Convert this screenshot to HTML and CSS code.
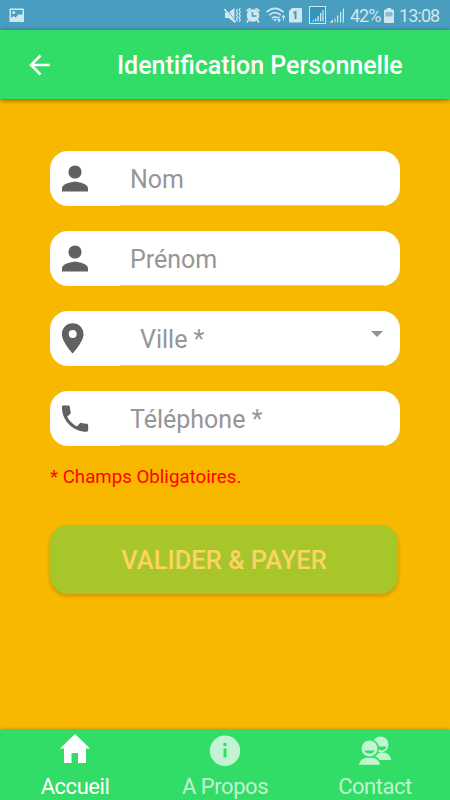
FILE: index.html
```
<!DOCTYPE html>
<html lang="fr">
<head>
  <meta charset="utf-8">
  <title>Identification Personnelle</title>
  <link rel="stylesheet" href="styles.css">
</head>
<body>
  <div class="status-bar">
    <svg class="picture" width="16" height="15" viewBox="0 0 16 15"><path fill-rule="evenodd" d="M1 .5h13.500q.5 0 .5.5v12.500q0 .5-.5.5H1q-.5 0-.5-.5V1q0-.5.5-.5zM2 2v8l2.500-2 2 1.500L10 6l1.500 1 2-1V2z"/><circle cx="4.700" cy="4.500" r="1.600"/></svg>
    <svg class="system" width="122" height="20" viewBox="223 5 122 20">
      <!-- vibrate / mute -->
      <path d="M225 12.500h3.500l6-4.500v14.500l-6-4.500H225z"/>
      <path d="M225.500 8l10.500 13.500" stroke="#499dbe" stroke-width="1"/>
      <path d="M224.300 9l11.500 13.500" stroke="#d1e7ef" stroke-width="1.800"/>
      <path d="M237.500 9l-1 2 1 2-1 2 1 2-1 2 1 2M240.300 8l-1.200 2 1.200 2-1.200 2 1.200 2-1.200 2 1.200 2-1.200 2" fill="none" stroke="#d1e7ef" stroke-width="1.200"/>
      <!-- alarm -->
      <circle cx="253" cy="15.500" r="6.300"/>
      <path d="M246.500 11l4-2.800M259.500 11l-4-2.800M248.500 20l-1.500 2.500M257.500 20l1.500 2.500" stroke="#d1e7ef" stroke-width="1.800"/>
      <path d="M252.500 12v4h4" fill="none" stroke="#499dbe" stroke-width="1.500"/>
      <!-- wifi -->
      <path d="M266.500 12.200q8.500-7.500 17 0M269.200 15.200q5.800-5 11.600 0M271.800 18.200q3.200-2.700 6.400 0" fill="none" stroke="#d1e7ef" stroke-width="1.700"/>
      <path d="M273 19h4l-2 2.500zM277 19.500h1.500v-3h1v3h1.500l-2 3zM281.500 17.500l2-3 2 3h-1.500v3h-1v-3z"/>
      <!-- sim card -->
      <path d="M292 8h9q1 0 1 1v12.500q0 1-1 1h-11q-1 0-1-1V11z"/>
      <path d="M293.500 13l2-1v7" fill="none" stroke="#499dbe" stroke-width="2"/>
      <!-- signal -->
      <rect x="309.500" y="6.500" width="16" height="17" fill="#3595b9" stroke="#d1e7ef"/>
      <path d="M312 21.500l2-2v2zM315 18.500h1.300v3H315zM317.500 16h1.300v5.500h-1.300zM320 13h1.300v8.500H320zM322.300 10h1.300v11.500h-1.300z"/>
      <path d="M329.500 22.500l3.500-3v3zM334.500 18.500h1v4h-1zM337 15.500h1.200v7H337zM340 12h1.200v10.500H340zM342.800 8.500h1.200v14h-1.200z"/>
    </svg>
    <span class="percent">42%</span>
    <svg class="battery" width="10" height="15" viewBox="0 0 10 15"><path d="M3 0h4v1.500h2q1 0 1 1v11.500q0 1-1 1H1q-1 0-1-1V2.500q0-1 1-1h2z"/><path fill="#84bcd2" d="M1.500 4h7v4.500h-7z"/></svg>
    <span class="time">13:08</span>
  </div>

  <header class="toolbar">
    <svg class="back" width="22" height="22" viewBox="0 0 22 22"><path d="M21 11H2.500M11.500 1.500L2 11l9.500 9.500"/></svg>
    <h1>Identification Personnelle</h1>
  </header>

  <main>
    <div class="field">
      <svg class="icon" width="32" height="40" viewBox="0 0 32 40"><circle cx="16" cy="13" r="6.600"/><path d="M3 32.500v-3.300c0-4.300 8.600-6.500 13-6.500s13 2.200 13 6.500v3.300z"/></svg>
      <span class="hint">Nom</span>
    </div>
    <div class="field">
      <svg class="icon" width="32" height="40" viewBox="0 0 32 40"><circle cx="16" cy="13" r="6.600"/><path d="M3 32.500v-3.300c0-4.300 8.600-6.500 13-6.500s13 2.200 13 6.500v3.300z"/></svg>
      <span class="hint">Prénom</span>
    </div>
    <div class="field">
      <svg class="icon" width="32" height="40" viewBox="0 0 32 40"><path fill-rule="evenodd" d="M13.700 4.200C7.500 4.200 2.900 9 2.900 15c0 8 10.800 19.500 10.800 19.500S24.500 23 24.500 15c0-6-4.600-10.800-10.800-10.800zm0 14.800a4 4 0 1 1 0-8 4 4 0 0 1 0 8z"/></svg>
      <span class="hint select">Ville *</span>
      <svg class="arrow" width="12" height="6" viewBox="0 0 12 6"><path d="M0 0h12L6 6z"/></svg>
    </div>
    <div class="field">
      <svg class="icon" width="32" height="40" viewBox="0 0 32 40"><path transform="translate(-1.500 2.100) scale(1.460)" d="M6.620 10.790c1.440 2.830 3.760 5.140 6.590 6.590l2.200-2.200c.27-.27.67-.36 1.020-.24 1.120.37 2.330.57 3.570.57.550 0 1 .45 1 1V20c0 .55-.45 1-1 1C10.610 21 3 13.390 3 4c0-.55.45-1 1-1h3.500c.55 0 1 .45 1 1 0 1.250.2 2.450.57 3.570.11.350.03.740-.25 1.020z"/></svg>
      <span class="hint">Téléphone *</span>
    </div>
    <p class="required">* Champs Obligatoires.</p>
    <button class="submit">VALIDER &amp; PAYER</button>
  </main>

  <nav class="tabs">
    <a class="tab active">
      <svg width="34" height="34" viewBox="0 0 34 34"><path d="M17 1L2 15.500h4V30h7.500V20h6.500v10h8V15.500h4z"/></svg>
      <span>Accueil</span>
    </a>
    <a class="tab">
      <svg width="34" height="34" viewBox="0 0 34 34"><path fill-rule="evenodd" d="M17 2.500a15.200 15.200 0 1 0 0 30.400 15.200 15.200 0 0 0 0-30.400zM15.500 10h3v3h-3zm0 5.500h3v9h-3z"/></svg>
      <span>A Propos</span>
    </a>
    <a class="tab">
      <svg width="34" height="34" viewBox="0 0 34 34">
        <circle cx="22.500" cy="11.500" r="8"/>
        <path d="M16 27c1-5 4-7.500 9-7.500 4.500 0 7.500 3 8.300 7.500z"/>
        <path fill="#31dd66" d="M17.500 13.500h11q-1 4-5.500 4z"/>
        <path stroke="#31dd66" stroke-width="1.600" d="M0 32.600c.8-6 4.500-9.200 11.500-9.200S22 26.600 23 32.600z"/>
        <circle cx="11.500" cy="15.500" r="8.800" stroke="#31dd66" stroke-width="1.600"/>
        <path fill="#31dd66" d="M6.500 17.500h10q-.8 3-5 3t-5-3z"/>
      </svg>
      <span>Contact</span>
    </a>
  </nav>
</body>
</html>
```

FILE: styles.css
```
* {
  box-sizing: border-box;
}

body {
  margin: 0;
  height: 800px;
  display: flex;
  flex-direction: column;
  overflow: hidden;
  background-color: #f9b800;
  font-family: Roboto, sans-serif;
}

svg {
  display: block;
  flex: none;
}

.status-bar {
  height: 30px;
  flex: none;
  display: flex;
  align-items: center;
  padding: 0 10px 0 9px;
  background-color: #499dbe;
  color: #d1e7ef;
  fill: #d1e7ef;
  font-size: 18px;
  line-height: 30px;
}

.status-bar span {
  padding-top: 2px;
}

.system {
  margin-left: auto;
}

.percent {
  width: 30px;
  margin-left: 5px;
  letter-spacing: -1px;
}

.battery {
  margin-left: 4px;
}

.time {
  width: 41px;
  margin-left: 5px;
  letter-spacing: -0.9px;
  white-space: nowrap;
}

.toolbar {
  height: 69px;
  flex: none;
  display: flex;
  align-items: center;
  padding-left: 29px;
  background-color: #31dd66;
  box-shadow: 0 1px 5px rgba(0, 0, 0, 0.5);
}

.back {
  fill: none;
  stroke: #ffffff;
  stroke-width: 2.5;
}

.toolbar h1 {
  margin: 2px 0 0 66px;
  color: #ffffff;
  font-size: 25px;
  font-weight: 500;
  white-space: nowrap;
}

main {
  flex: 1;
  padding: 52px 50px 0;
}

.field {
  height: 55px;
  margin-bottom: 25px;
  display: flex;
  align-items: center;
  padding-left: 9px;
  border-radius: 18px;
  background: linear-gradient(#cccccc, #cccccc) 70px 100% / 264px 1px no-repeat #ffffff;
}

.icon {
  margin-top: 1px;
  fill: #616161;
}

.hint {
  margin: 2px 0 0 39px;
  color: #969696;
  font-size: 25px;
}

.select {
  margin-left: 49px;
}

.arrow {
  margin: -9px 17px 0 auto;
  fill: #929292;
}

.required {
  margin: -5px 0 0;
  color: #ff0000;
  font-size: 18.7px;
  line-height: 22px;
}

.submit {
  display: block;
  width: 348px;
  height: 69px;
  margin-top: 37px;
  padding: 0;
  border: none;
  border-radius: 18px;
  background-color: #a7c629;
  box-shadow: 0 2px 4px rgba(0, 0, 0, 0.2);
  color: #fcd462;
  font-family: inherit;
  font-size: 25.5px;
  font-weight: 500;
}

.tabs {
  height: 70px;
  flex: none;
  display: flex;
  background-color: #31dd66;
  box-shadow: 0 0 4px rgba(0, 0, 0, 0.35);
}

.tab {
  flex: 1;
  display: flex;
  flex-direction: column;
  align-items: center;
  padding-top: 3px;
  color: #c1f5d1;
  fill: #c1f5d1;
  font-size: 22px;
  letter-spacing: -0.45px;
  line-height: 26px;
}

.tab span {
  margin-top: 7px;
}

.active {
  color: #ffffff;
  fill: #ffffff;
}
```
